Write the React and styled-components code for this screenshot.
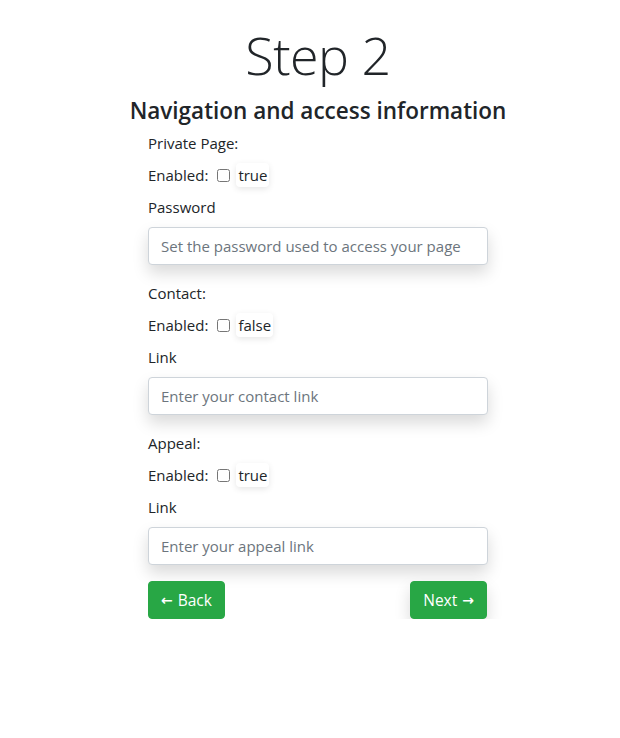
import React from "react";
import styled, { createGlobalStyle } from "styled-components";

const Global = createGlobalStyle`
  html, body { margin: 0; padding: 0; background: #fff; }
  body {
    font-family: "Open Sans", "Noto Sans", sans-serif;
    font-size: 16px;
    line-height: 1.5;
    color: #212529;
  }
  * { box-sizing: border-box; }
`;

const Page = styled.div`
  padding: 24px 0 0 16px;
  display: flex;
  flex-direction: column;
  align-items: center;
`;

const Title = styled.h1`
  margin: 0;
  font-size: 52px;
  font-weight: 300;
  line-height: 62px;
  letter-spacing: -0.5px;
`;

const Subtitle = styled.h3`
  margin: 11px 0 7px;
  font-size: 22.5px;
  font-weight: 600;
  line-height: 27px;
`;

const Form = styled.form`
  width: 340px;
  display: flex;
  flex-direction: column;
`;

const Label = styled.div`
  margin-bottom: 8px;
  font-size: 15px;
  line-height: 24px;
  display: flex;
  align-items: center;
`;

const Check = styled.input`
  margin: 0 6px 0 9px;
  width: 13px;
  height: 13px;
`;

const Value = styled.span`
  padding: 0 2px;
  border-radius: 4px;
  background: #fff;
  box-shadow: 0 2px 6px rgba(0, 0, 0, 0.1);
`;

const Input = styled.input`
  height: 38px;
  padding: 6px 12px;
  margin-bottom: 16px;
  border: 1px solid #ced4da;
  border-radius: 4px;
  font-family: inherit;
  font-size: 15px;
  color: #495057;
  box-shadow: 0 8px 16px rgba(0, 0, 0, 0.15);
  &::placeholder { color: #6c757d; }
`;

const Buttons = styled.div`
  display: flex;
  justify-content: space-between;
`;

const Button = styled.button`
  height: 38px;
  padding: 0 12px;
  display: inline-flex;
  align-items: center;
  gap: 5px;
  border: 1px solid #28a745;
  border-radius: 4px;
  background: #28a745;
  color: #fff;
  font-family: inherit;
  font-size: 15.5px;
  line-height: 24px;
  margin-right: ${(p) => (p.$shadow ? "1px" : "0")};
  box-shadow: ${(p) => (p.$shadow ? "0 8px 16px rgba(0,0,0,0.15)" : "none")};
`;

const Arrow = styled.span`
  font-family: "DejaVu Sans", sans-serif;
  font-size: 14px;
  font-weight: bold;
`;

function Section({ title, enabled, field, placeholder }) {
  return (
    <>
      <Label>{title}</Label>
      <Label>
        Enabled:
        <Check type="checkbox" />
        <Value>{enabled}</Value>
      </Label>
      <Label>{field}</Label>
      <Input type="text" placeholder={placeholder} />
    </>
  );
}

export default function App() {
  return (
    <>
      <Global />
      <Page>
        <Title>Step 2</Title>
        <Subtitle>Navigation and access information</Subtitle>
        <Form>
          <Section
            title="Private Page:"
            enabled="true"
            field="Password"
            placeholder="Set the password used to access your page"
          />
          <Section
            title="Contact:"
            enabled="false"
            field="Link"
            placeholder="Enter your contact link"
          />
          <Section
            title="Appeal:"
            enabled="true"
            field="Link"
            placeholder="Enter your appeal link"
          />
          <Buttons>
            <Button type="button"><Arrow>←</Arrow>Back</Button>
            <Button type="button" $shadow>Next<Arrow>→</Arrow></Button>
          </Buttons>
        </Form>
      </Page>
    </>
  );
}
